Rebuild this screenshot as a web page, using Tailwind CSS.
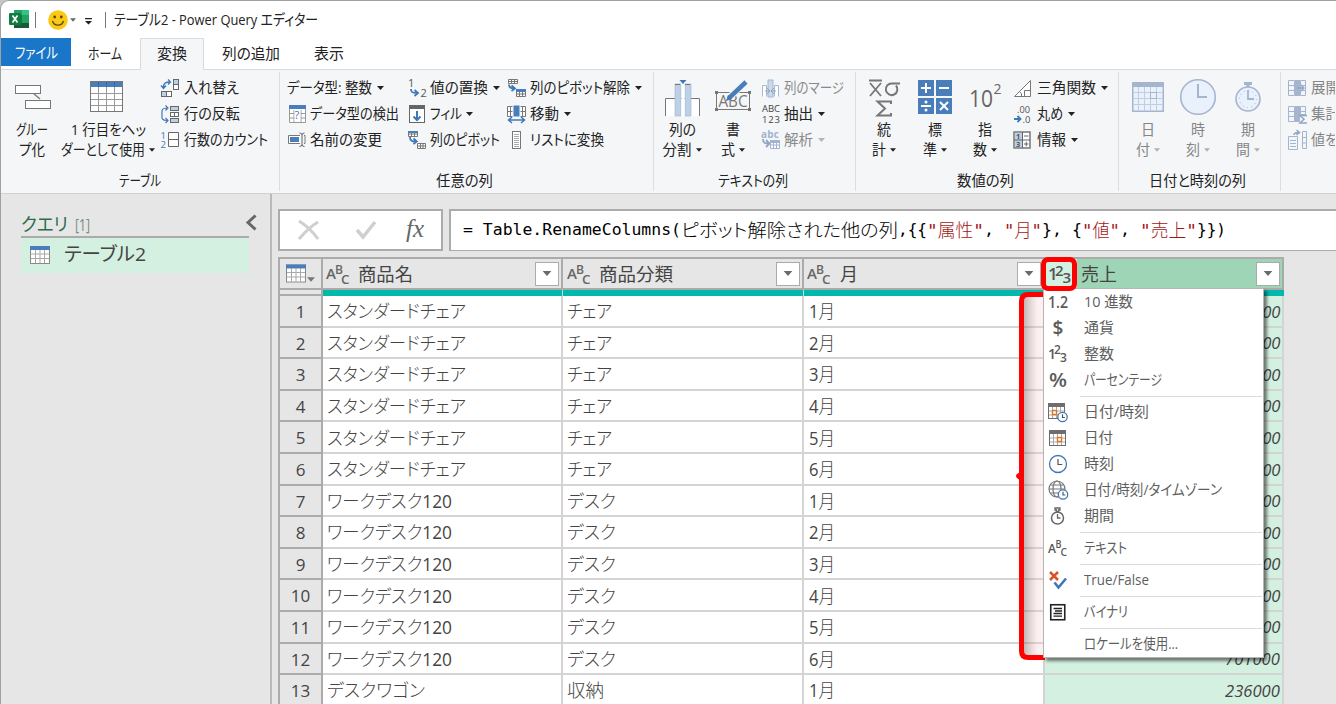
<!DOCTYPE html>
<html lang="ja">
<head>
<meta charset="utf-8">
<title>テーブル2 - Power Query エディター</title>
<script src="https://cdn.jsdelivr.net/npm/@tailwindcss/browser@4"></script>
</head>
<body class="w-[1336px] h-[704px] overflow-hidden bg-[#c6c6c6] font-['Open_Sans','Noto_Sans_CJK_JP',sans-serif] text-[15px] text-[#222] [&_svg]:overflow-visible">
<svg class="hidden">
  <symbol id="caret" viewBox="0 0 7 4"><path d="M0 0h7L3.500 4z" fill="currentColor"/></symbol>
  <symbol id="table" viewBox="0 0 20 18"><rect x=".5" y=".5" width="19" height="17" fill="#fff" stroke="#8a8a8a"/><path d="M1 8h18M1 12.500h18M5.500 4v13M10 4v13M14.500 4v13" stroke="#a9a9a9"/><path d="M0 0h20v4H0z" fill="#4a7ebb"/></symbol>
  <symbol id="cal" viewBox="0 0 17 16"><rect x=".5" y=".5" width="16" height="15" fill="#fff" stroke="#6d6d6d"/><path d="M0 0h17v4H0z" fill="#6d6d6d"/><path d="M1 8h15M1 12h15M4.500 4v11M8.500 4v11M12.500 4v11" stroke="#aaa"/><rect x="8.500" y="7.500" width="4" height="4" fill="#fff" stroke="#e0751a" stroke-width="1.400"/></symbol>
  <symbol id="cal2" viewBox="0 0 17 16"><rect x=".5" y=".5" width="16" height="15" fill="#fff" stroke="#6d6d6d"/><path d="M0 0h17v4H0z" fill="#6d6d6d"/><path d="M1 8h15M1 12h15M4.500 4v11M8.500 4v11M12.500 4v11" stroke="#aaa"/><rect x="4.500" y="7.500" width="4" height="4" fill="#fff" stroke="#e0751a" stroke-width="1.400"/></symbol>
</svg>

<div class="w-full h-full flex flex-col bg-white rounded-tl-[9px] border-l border-t border-[#a0a0a0] overflow-hidden">
  <!-- title bar -->
  <header class="h-[37px] shrink-0 flex items-center pl-[8px]">
    <svg class="w-[21px] h-[19px] shrink-0" viewBox="0 0 21 19"><path d="M5 0h15v18H5z" fill="#21a366"/><path d="M5 0h8v5H5z" fill="#21a366"/><path d="M13 0h7v5h-7z" fill="#33c481"/><path d="M5 5h8v8H5z" fill="#107c41"/><path d="M5 13h15v5H5z" fill="#185c37"/><rect y="3" width="12" height="12" rx="1" fill="#107c41"/><path d="M3.500 5.500l5 7M8.500 5.500l-5 7" stroke="#fff" stroke-width="1.700"/></svg>
    <span class="w-px h-4 bg-[#777] ml-[5px]"></span>
    <svg class="w-[20px] h-[20px] ml-[12px] shrink-0" viewBox="0 0 20 20"><circle cx="10" cy="10" r="9.800" fill="#fcc816"/><circle cx="6.700" cy="7" r="1.400" fill="#5c4a10"/><circle cx="13.300" cy="7" r="1.400" fill="#5c4a10"/><path d="M4.500 11c1.500 5.500 9.500 5.500 11 0" fill="none" stroke="#5c4a10" stroke-width="1.300"/></svg>
    <svg class="w-[6px] h-[4px] ml-[2px] text-[#666]"><use href="#caret"/></svg>
    <svg class="w-[7px] h-[7px] ml-[9px] mt-[3px]" viewBox="0 0 7 7"><path d="M0 0h7v1.300H0zM0 3h7L3.500 6.500z" fill="#222"/></svg>
    <span class="w-px h-4 bg-[#777] ml-[13px]"></span>
    <span class="ml-[8px] text-[15px]" data-w="204">テーブル2 - Power Query エディター</span>
  </header>
  <!-- tabs -->
  <nav class="h-[32px] shrink-0 flex border-b border-[#d9dbde]">
    <div class="w-[70px] h-[28px] bg-[#1976c8] text-white flex items-center pl-[14px]"><span data-w="43">ファイル</span></div>
    <div class="w-[69px] h-[31px] flex items-center pl-[17px]"><span data-w="34">ホーム</span></div>
    <div class="w-[64px] h-[32px] bg-[#f4f6f8] border border-b-0 border-[#d9dbde] flex items-center pl-[16px] pb-[2px]"><span data-w="30">変換</span></div>
    <div class="w-[92px] h-[31px] flex items-center pl-[18px]"><span data-w="58">列の追加</span></div>
    <div class="h-[31px] flex items-center pl-[18px]"><span data-w="30">表示</span></div>
  </nav>
  <!-- ribbon -->
  <section class="h-[124px] shrink-0 bg-[#f4f6f8] border-b border-[#cfd1d4] flex py-[2px] text-[14.500px] leading-[20px]">
    <!-- table group -->
    <div class="w-[279px] shrink-0 border-r border-[#dcdee1] flex flex-col">
      <div class="h-[98px] flex">
        <div class="w-[62px] flex flex-col items-center pt-[3px]">
          <svg class="w-[38px] h-[45px]" viewBox="0 0 38 45"><path d="M20 18l7 6" stroke="#777" stroke-width="1.300"/><rect x="2.500" y="10.500" width="25" height="8" fill="#fff" stroke="#777"/><rect x="12.500" y="25.500" width="25" height="8" fill="#fff" stroke="#777"/></svg>
          <span data-w="32">グルー</span><span data-w="26">プ化</span>
        </div>
        <div class="w-[90px] flex flex-col items-center pt-[3px]">
          <svg class="w-[34px] h-[45px]" viewBox="0 0 34 45"><rect x="-.5" y="6.500" width="32" height="30" fill="#fff" stroke="#777"/><path d="M0 18.500h31M0 24.500h31M0 30.500h31M7.500 12v24M15.500 12v24M23.500 12v24" stroke="#999"/><path d="M0 7h31v5H0z" fill="#4a7ebb"/><path d="M7.500 7v5M15.500 7v5M23.500 7v5" stroke="#3768a3"/></svg>
          <span data-w="75">1 行目をヘッ</span>
          <div class="flex items-center gap-[4px]"><span data-w="84">ダーとして使用</span><svg class="w-[6px] h-[4px]"><use href="#caret"/></svg></div>
        </div>
        <div class="flex flex-col pt-[3px] pl-[8px]">
          <div class="h-[26px] flex items-center"><svg class="w-[19px] h-[19px] mr-[4px]" viewBox="0 0 19 19"><rect x="12.500" y=".5" width="5" height="5" fill="#bcd0e6" stroke="#666"/><rect x="12.500" y="5.500" width="5" height="5" fill="#fff" stroke="#666"/><rect x=".5" y="12.500" width="5" height="5" fill="#bcd0e6" stroke="#666"/><rect x="5.500" y="12.500" width="5" height="5" fill="#fff" stroke="#666"/><path d="M2.500 9C2 4 5 3 9 3M0 6.500L2.500 9.500L5 6.500M7 .5L9.500 3L7 5.500" fill="none" stroke="#3f78b5" stroke-width="1.300"/></svg><span data-w="55">入れ替え</span></div>
          <div class="h-[26px] flex items-center"><svg class="w-[19px] h-[19px] mr-[4px]" viewBox="0 0 19 19"><path d="M6 3C0 3 1 6 1 9.500S0 15.500 6 15.500M4.500 .5L7 3L4.500 5.500M4.500 13l2.500 2.500L4.500 18" fill="none" stroke="#3f78b5" stroke-width="1.200"/><rect x="9.500" y="1.500" width="8" height="4" fill="#bcd0e6" stroke="#666"/><rect x="9.500" y="7.500" width="8" height="4" fill="#fff" stroke="#666"/><path d="M13.500 7v5" stroke="#666"/><rect x="9.500" y="13.500" width="8" height="4" fill="#bcd0e6" stroke="#666"/></svg><span data-w="56">行の反転</span></div>
          <div class="h-[26px] flex items-center"><svg class="w-[19px] h-[19px] mr-[4px]" viewBox="0 0 19 19"><text x="-.5" y="8" font-size="9.500" fill="#3f78b5">1</text><text x="-.5" y="17" font-size="9.500" fill="#3f78b5">2</text><path d="M7.500 1.500h10v14h-10zM7.500 8.500h10" fill="#fff" stroke="#666"/></svg><span data-w="84">行数のカウント</span></div>
        </div>
      </div>
      <div class="flex justify-center pt-px"><span data-w="42">テーブル</span></div>
    </div>
    <!-- any column group -->
    <div class="w-[374px] shrink-0 border-r border-[#dcdee1] flex flex-col">
      <div class="h-[98px] flex pt-[3px] pl-[7px]">
        <div class="w-[121px]">
          <div class="h-[26px] flex items-center"><span data-w="85">データ型: 整数</span><svg class="w-[7px] h-[4px] ml-[5px]"><use href="#caret"/></svg></div>
          <div class="h-[26px] flex items-center"><svg class="w-[17px] h-[18px] ml-[2px] mr-[4px]" viewBox="0 0 17 18"><path d="M.5.5h16v17H.5zM0 8.500h17M0 13h17M5 5v13M12 5v13" fill="#fff" stroke="#999"/><path d="M0 0h17v4H0z" fill="#4a7ebb"/><path d="M5.500 5h6v11h-6z" fill="#fff"/><text x="5.500" y="14" font-size="11" fill="#3f78b5">?</text></svg><span data-w="89">データ型の検出</span></div>
          <div class="h-[26px] flex items-center"><svg class="w-[19px] h-[16px] mr-[4px]" viewBox="0 0 19 16"><path d="M13 3.500H1.500v8H13M17 3.500h1v8h-1" fill="#fff" stroke="#777"/><path d="M3 5h9v5H3z" fill="#4a7ebb"/><path d="M12.500 1Q15 1 15 3v9.500q0 2-2.500 2M17.500 1Q15 1 15 3M15 12.500q0 2 2.500 2" fill="none" stroke="#666"/></svg><span data-w="72">名前の変更</span></div>
        </div>
        <div class="w-[99px]">
          <div class="h-[26px] flex items-center"><svg class="w-[20px] h-[19px] mr-[2px]" viewBox="0 0 20 19"><text x="0" y="8" font-size="11" fill="#555">1</text><text x="12.500" y="18" font-size="11" fill="#555">2</text><path d="M3 10c0 3 1 4 6 4M6.500 11L10 14L6.500 17" fill="none" stroke="#3f78b5" stroke-width="1.800"/></svg><span data-w="58">値の置換</span><svg class="w-[7px] h-[4px] ml-[5px]"><use href="#caret"/></svg></div>
          <div class="h-[26px] flex items-center"><svg class="w-[20px] h-[19px] mr-[2px]" viewBox="0 0 20 19"><rect x="1.500" y=".5" width="15" height="17" fill="#fff" stroke="#666"/><path d="M1 0h16v4H1z" fill="#666"/><path d="M9 6v9M5.500 11.500L9 15l3.500-3.500" fill="none" stroke="#3f78b5" stroke-width="2"/></svg><span data-w="32">フィル</span><svg class="w-[7px] h-[4px] ml-[4px]"><use href="#caret"/></svg></div>
          <div class="h-[26px] flex items-center"><svg class="w-[20px] h-[19px] mr-[2px]" viewBox="0 0 20 19"><path d="M.5.5h9v5h-9zM0 3h10M3.500 0v6M6.500 0v6M9.500 12.500h8v5h-8zM9 15h9M12.500 12v6M15 12v6" fill="#fff" stroke="#777"/><path d="M0 0h10v2H0z" fill="#4a7ebb"/><path d="M2 6c0 4 2 4.500 6 4.500M5.500 7.500L8.800 10.500L5.500 13" fill="none" stroke="#3f78b5" stroke-width="1.800"/></svg><span data-w="70">列のピボット</span></div>
        </div>
        <div>
          <div class="h-[26px] flex items-center"><svg class="w-[20px] h-[19px] mr-[3px]" viewBox="0 0 20 19"><path d="M1.500.5h9v4h-9zM1 2.500h10M4.500 0v5M7.500 0v5M9.500 10.500h9v7h-9zM9 15h10M12.500 12v6M15.500 12v6" fill="#fff" stroke="#777"/><path d="M9 10h10v3H9z" fill="#4a7ebb"/><path d="M2 5.500c0 3 2 4 5 4M4.500 6.500L8 9.500L4.500 12" fill="none" stroke="#3f78b5" stroke-width="1.800"/></svg><span data-w="100">列のピボット解除</span><svg class="w-[7px] h-[4px] ml-[5px]"><use href="#caret"/></svg></div>
          <div class="h-[26px] flex items-center"><svg class="w-[20px] h-[19px] mr-[3px]" viewBox="0 0 20 19"><path d="M.5 1.500h18v10H.5zM0 6.500h19M3.500 1v11M15.500 1v11" fill="#fff" stroke="#777"/><path d="M6 0h7v12H6z" fill="#4a7ebb" stroke="#f4f6f8"/><path d="M2 15h15M5 12l-3.500 3L5 18M14 12l3.500 3L14 18" fill="none" stroke="#3f78b5" stroke-width="1.500"/></svg><span data-w="29">移動</span><svg class="w-[7px] h-[4px] ml-[5px]"><use href="#caret"/></svg></div>
          <div class="h-[26px] flex items-center"><svg class="w-[20px] h-[19px] mr-[3px]" viewBox="0 0 20 19"><rect x="5.500" y=".5" width="8" height="17" fill="#fff" stroke="#777"/><path d="M7 3.500h5M7 5.500h5M7 7.500h5M7 9.500h5M7 11.500h5M7 13.500h5M7 15.500h5" stroke="#aaa"/></svg><span data-w="74">リストに変換</span></div>
        </div>
      </div>
      <div class="flex justify-center pt-px pr-[4px]"><span data-w="57">任意の列</span></div>
    </div>
    <!-- text column group -->
    <div class="w-[202px] shrink-0 border-r border-[#dcdee1] flex flex-col">
      <div class="h-[98px] flex pt-[3px] pl-[3px]">
        <div class="w-[50px] flex flex-col items-center">
          <svg class="w-[38px] h-[45px]" viewBox="0 0 38 45"><path d="M2.500 41V23.500h34V41" fill="#fff" stroke="#777"/><path d="M12 9h6v32h-6zM22 9h6v32h-6z" fill="#bcd0e6" stroke="#9db3cc" stroke-width=".6"/><path d="M18.500 9h3v32h-3z" fill="#fff"/><path d="M12 9.500h5M22 9.500h5" stroke="#777"/><path d="M16.500 5h7L20 9z" fill="#3f78b5"/></svg>
          <span data-w="27">列の</span>
          <div class="flex items-center gap-[4px]"><span data-w="29">分割</span><svg class="w-[6px] h-[4px]"><use href="#caret"/></svg></div>
        </div>
        <div class="w-[51px] flex flex-col items-center">
          <svg class="w-[38px] h-[45px]" viewBox="0 0 38 45"><rect x="2.500" y="17.500" width="33" height="17" fill="none" stroke="#777"/><path d="M1 16h3v3H1zM34 16h3v3h-3zM1 33h3v3H1zM34 33h3v3h-3z" fill="#777"/><text x="4.500" y="31.500" font-size="15.500" textLength="29" lengthAdjust="spacingAndGlyphs" fill="#777">ABC</text><path d="M17 21L31 7" stroke="#f4f6f8" stroke-width="7"/><path d="M15 23L32 7" stroke="#4a7ebb" stroke-width="4.500"/><path d="M12 26l2-6 4 4z" fill="#3f78b5"/></svg>
          <span data-w="14">書</span>
          <div class="flex items-center gap-[4px]"><span data-w="14">式</span><svg class="w-[6px] h-[4px]"><use href="#caret"/></svg></div>
        </div>
        <div class="pl-[3px]">
          <div class="h-[26px] flex items-center text-[#8a8a8a]"><svg class="w-[20px] h-[19px] mr-[3px]" viewBox="0 0 20 19"><path d="M1.500 17.500v-11h4v11M13.500 17.500v-11h4v11" fill="#fff" stroke="#a7b8d0"/><path d="M7 1h5v17H7z" fill="#cbd9ea" stroke="#a7b8d0"/><path d="M4 12h4M15 12h-4M6 9l3 3-3 3M13 9l-3 3 3 3" fill="none" stroke="#8fa5c4"/></svg><span data-w="60">列のマージ</span></div>
          <div class="h-[26px] flex items-center"><svg class="w-[20px] h-[22px] mr-[3px]" viewBox="0 0 20 22"><text x="1" y="9" font-size="9.500" textLength="18" fill="#444">ABC</text><text x="1" y="19.500" font-size="9.500" textLength="18" fill="#444">123</text></svg><span data-w="29">抽出</span><svg class="w-[7px] h-[4px] ml-[5px]"><use href="#caret"/></svg></div>
          <div class="h-[26px] flex items-center text-[#8a8a8a]"><svg class="w-[20px] h-[20px] mr-[3px]" viewBox="0 0 20 20"><text x="0" y="8" font-size="10" font-weight="bold" textLength="18" fill="#a3b4d0">abc</text><path d="M2 9c0 4 2 4.500 6 4.500M5 10l3.500 3.500L5 17" fill="none" stroke="#8fa5c4" stroke-width="1.800"/><path d="M9.500 11.500h9v7h-9zM9 15h10M12.500 12v6M15.500 12v6" fill="#fff" stroke="#a3b4d0"/><path d="M9 10h10v3H9z" fill="#a3b4d0"/></svg><span data-w="29">解析</span><svg class="w-[7px] h-[4px] ml-[5px] text-[#b5b5b5]"><use href="#caret"/></svg></div>
        </div>
      </div>
      <div class="flex justify-center pt-px pr-[4px]"><span data-w="70">テキストの列</span></div>
    </div>
    <!-- number column group -->
    <div class="w-[263px] shrink-0 border-r border-[#dcdee1] flex flex-col">
      <div class="h-[98px] flex pt-[3px] pl-[3px]">
        <div class="w-[50px] flex flex-col items-center">
          <svg class="w-[38px] h-[45px]" viewBox="0 0 38 45"><path d="M4 5.500h13M5 8l11 13M16 8L5 21" stroke="#777" stroke-width="1.800"/><path d="M35 8.500h-8a5.800 5.800 0 1 0 4 2" fill="none" stroke="#777" stroke-width="2"/><path d="M26 29v-2.500H12.500L20 33.500L12.500 40.500H26V38" fill="none" stroke="#777" stroke-width="2"/></svg>
          <span data-w="14">統</span>
          <div class="flex items-center gap-[4px]"><span data-w="14">計</span><svg class="w-[6px] h-[4px]"><use href="#caret"/></svg></div>
        </div>
        <div class="w-[51px] flex flex-col items-center">
          <svg class="w-[36px] h-[45px]" viewBox="0 0 36 45"><path d="M1 5h16v16H1zM19 5h16v16H19zM1 23h16v16H1zM19 23h16v16H19z" fill="#4a7ebb"/><path d="M4 13h10M9 8v10M22 13h10M4 31h10M23 27l8 8M31 27l-8 8" stroke="#fff" stroke-width="2"/><circle cx="9" cy="27" r="1.500" fill="#fff"/><circle cx="9" cy="35" r="1.500" fill="#fff"/></svg>
          <span data-w="14">標</span>
          <div class="flex items-center gap-[4px]"><span data-w="14">準</span><svg class="w-[6px] h-[4px]"><use href="#caret"/></svg></div>
        </div>
        <div class="w-[50px] flex flex-col items-center">
          <svg class="w-[34px] h-[45px]" viewBox="0 0 34 45"><text x="1" y="32" font-size="23" textLength="24" lengthAdjust="spacingAndGlyphs" fill="#666">10</text><text x="25.500" y="18.500" font-size="14" fill="#666">2</text></svg>
          <span data-w="14">指</span>
          <div class="flex items-center gap-[4px]"><span data-w="14">数</span><svg class="w-[6px] h-[4px]"><use href="#caret"/></svg></div>
        </div>
        <div class="pl-[3px]">
          <div class="h-[26px] flex items-center"><svg class="w-[20px] h-[19px] mr-[4px]" viewBox="0 0 20 19"><path d="M1.500 17.500L17.500 1.500v16zM11.500 17v-5.500h6M6.500 12.500q3 2 2 5" fill="#fff" stroke="#777"/></svg><span data-w="59">三角関数</span><svg class="w-[7px] h-[4px] ml-[5px]"><use href="#caret"/></svg></div>
          <div class="h-[26px] flex items-center"><svg class="w-[20px] h-[19px] mr-[4px]" viewBox="0 0 20 19"><text x="4" y="7.500" font-size="9.500" textLength="13" lengthAdjust="spacingAndGlyphs" fill="#555">.00</text><text x="9.500" y="17.500" font-size="9.500" fill="#555">.0</text><path d="M1 14h6M4.500 11L7.500 14L4.500 17" fill="none" stroke="#3f78b5" stroke-width="1.800"/></svg><span data-w="26">丸め</span><svg class="w-[7px] h-[4px] ml-[5px]"><use href="#caret"/></svg></div>
          <div class="h-[26px] flex items-center"><svg class="w-[20px] h-[19px] mr-[4px]" viewBox="0 0 20 19"><rect x="1" y="1" width="16" height="16" fill="#fff" stroke="#777" stroke-width="1.500"/><path d="M2 2h7v14H2z" fill="#bcd0e6"/><path d="M9.500 1v16M1 9h16M11 5h4.500M11 13h4.500M13.250 10.800v4.500" stroke="#666"/><text x="3" y="8.300" font-size="7.500" font-weight="bold" fill="#555">1</text><text x="3" y="16" font-size="7.500" font-weight="bold" fill="#555">3</text></svg><span data-w="29">情報</span><svg class="w-[7px] h-[4px] ml-[5px]"><use href="#caret"/></svg></div>
        </div>
      </div>
      <div class="flex justify-center pt-px pr-[4px]"><span data-w="57">数値の列</span></div>
    </div>
    <!-- date and time group -->
    <div class="w-[162px] shrink-0 border-r border-[#dcdee1] flex flex-col">
      <div class="h-[98px] flex pt-[3px] pl-[4px] text-[#858585]">
        <div class="w-[50px] flex flex-col items-center">
          <svg class="w-[32px] h-[45px]" viewBox="0 0 32 45"><rect x=".75" y="7.750" width="30.500" height="28.500" fill="#e9f1fc" stroke="#a6b4ce" stroke-width="1.500"/><path d="M1 17.500h30M1 23.500h30M1 29.500h30M6.500 12v24M12.500 12v24M18.500 12v24M24.500 12v24" stroke="#c3cde0"/><path d="M0 7h32v5H0z" fill="#a6b4ce"/><rect x="18.500" y="17.500" width="6" height="6" fill="#e9f1fc" stroke="#a6b4ce"/></svg>
          <span data-w="14">日</span>
          <div class="flex items-center gap-[4px]"><span data-w="14">付</span><svg class="w-[6px] h-[4px] text-[#b0b0b0]"><use href="#caret"/></svg></div>
        </div>
        <div class="w-[50px] flex flex-col items-center">
          <svg class="w-[38px] h-[45px]" viewBox="0 0 38 45"><circle cx="19" cy="22" r="17.300" fill="#e9f1fc" stroke="#a6b4ce" stroke-width="1.600"/><path d="M19 9v13h9" fill="none" stroke="#a6b4ce" stroke-width="2"/></svg>
          <span data-w="14">時</span>
          <div class="flex items-center gap-[4px]"><span data-w="14">刻</span><svg class="w-[6px] h-[4px] text-[#b0b0b0]"><use href="#caret"/></svg></div>
        </div>
        <div class="w-[50px] flex flex-col items-center">
          <svg class="w-[28px] h-[45px]" viewBox="0 0 28 45"><path d="M10 7h8v3h-2.500v3h-3v-3H10z" fill="#a6b4ce"/><circle cx="14" cy="24" r="12" fill="#e9f1fc" stroke="#a6b4ce" stroke-width="1.600"/><circle cx="14" cy="24" r="8.500" fill="none" stroke="#a6b4ce" stroke-dasharray="1 3.450"/><path d="M14 15v9h6" fill="none" stroke="#a6b4ce" stroke-width="1.800"/></svg>
          <span data-w="14">期</span>
          <div class="flex items-center gap-[4px]"><span data-w="14">間</span><svg class="w-[6px] h-[4px] text-[#b0b0b0]"><use href="#caret"/></svg></div>
        </div>
      </div>
      <div class="flex justify-center pt-px pr-[4px]"><span data-w="97">日付と時刻の列</span></div>
    </div>
    <!-- structured column group, cut by the window edge -->
    <div class="pt-[3px] pl-[6px] w-[54px] overflow-hidden text-[#858585]">
      <div class="h-[26px] w-[80px] flex items-center"><svg class="w-[21px] h-[19px] mr-[3px] shrink-0" viewBox="0 0 21 19"><path d="M1.500 1.500h6v15h-6zM1 6.500h6M1 11.500h6M13.500 1.500h5v15h-5zM13 6.500h5M13 11.500h5" fill="#f1f6fd" stroke="#a6b4ce"/><path d="M8 1h5v16H8z" fill="#a6b4ce"/><path d="M10 9h7M14 6l3 3-3 3" fill="none" stroke="#8fa5c4" stroke-width="1.300"/></svg><span data-w="29">展開</span></div>
      <div class="h-[26px] w-[80px] flex items-center"><svg class="w-[21px] h-[19px] mr-[3px] shrink-0" viewBox="0 0 21 19"><path d="M1.500 1.500h6v15h-6zM1 6.500h6M1 11.500h6M13.500 1.500h5v8h-5zM13 6.500h5" fill="#f1f6fd" stroke="#a6b4ce"/><path d="M8 1h5v16H8z" fill="#a6b4ce"/><path d="M20 10.500h-7l4 3.700-4 3.800h7" fill="none" stroke="#8fa5c4" stroke-width="1.500"/></svg><span data-w="29">集計</span></div>
      <div class="h-[26px] w-[80px] flex items-center"><svg class="w-[21px] h-[20px] mr-[3px] shrink-0" viewBox="0 0 21 20"><path d="M1.500 6.500h9v13h-9zM3 10.500h6M3 13.500h6M3 16.500h6M15.500 1.500h4v17h-4zM15 7.500h5M15 13h5" fill="#f1f6fd" stroke="#a6b4ce"/><path d="M7 5q0-2.500 5-2.500M9.500 0l3 2.500-3 2.500" fill="none" stroke="#8fa5c4" stroke-width="1.500"/></svg><span data-w="27">値を</span></div>
    </div>
  </section>

  <!-- workspace -->
  <main class="flex-1 min-h-0 flex bg-[#e6e6e6]">
    <aside class="w-[271px] shrink-0 border-r-2 border-[#b9b9b9] pl-[20px] pt-[16px]">
      <div class="w-[236px] h-[26px] flex items-center justify-between">
        <div class="flex items-center text-[#2c6e4b] pt-[3px]"><span class="text-[18px]" data-w="47">クエリ</span><span class="ml-[7px] text-[16px] text-[#6f8f80]" data-w="15">[1]</span></div>
        <svg class="w-[12px] h-[17px] mb-[2px]" viewBox="0 0 12 17"><path d="M10.500 1.500L3 8.500l7.500 7" fill="none" stroke="#666" stroke-width="3"/></svg>
      </div>
      <div class="w-[228px] h-[37px] border-t-2 border-[#ababab] bg-[#d4f0e0] flex items-center pl-[9px] pb-[2px]">
        <svg class="w-[20px] h-[18px]"><use href="#table"/></svg>
        <span class="ml-[14px] text-[19px] text-[#444]" data-w="82">テーブル2</span>
      </div>
    </aside>
    <div class="flex-1 min-w-0 pl-[6px] pt-[15px]">
      <div class="flex gap-[6px] h-[42px]">
        <div class="w-[165px] shrink-0 border-2 border-[#ababab] bg-white flex items-center">
          <svg class="w-[24px] h-[22px] ml-[17px]" viewBox="0 0 24 22"><path d="M2 2C10 7 16 13 21 20M21 3C14 7 8 13 2 20" fill="none" stroke="#cfcfcf" stroke-width="3"/></svg>
          <svg class="w-[22px] h-[20px] ml-[34px]" viewBox="0 0 22 20"><path d="M2 10l6 7L20 2" fill="none" stroke="#cfcfcf" stroke-width="3.500"/></svg>
          <span class="ml-[29px] mb-[3px] font-['Liberation_Serif',serif] italic text-[25px] leading-none text-[#666]" data-w="18">fx</span>
        </div>
        <div class="flex-1 border-2 border-r-0 border-b border-[#ababab] bg-white flex items-center pl-[12px] text-black whitespace-pre font-['DejaVu_Sans_Mono','Noto_Sans_CJK_JP',monospace] text-[16.400px]">
          <span data-w="218">= Table.RenameColumns(</span><span class="text-[18px] font-light" data-w="217">ピボット解除された他の列</span><span data-w="29">,{{</span><span class="text-[#a31515] text-[18px] font-light" data-w="57">"属性"</span><span data-w="20">, </span><span class="text-[#a31515] text-[18px] font-light" data-w="38">"月"</span><span data-w="40">}, {</span><span class="text-[#a31515] text-[18px] font-light" data-w="38">"値"</span><span data-w="20">, </span><span class="text-[#a31515] text-[18px] font-light" data-w="57">"売上"</span><span data-w="29">}})</span>
        </div>
      </div>
      <div class="relative mt-[6px] w-[1006px] border-t-2 border-l-2 border-[#ababab]">
        <!-- column headers -->
        <div class="flex h-[31px] border-b-2 border-[#ababab] text-[18.500px] text-[#444]">
          <div class="w-[43px] border-r-2 border-[#ababab] flex items-center pl-[6px]"><svg class="w-[20px] h-[19px]"><use href="#table"/></svg><svg class="w-[8px] h-[5px] ml-[1px] mt-[12px] text-[#777]"><use href="#caret"/></svg></div>
          <div id="heads" class="flex"></div>
        </div>
        <!-- quality bar -->
        <div class="flex h-[6px]">
          <div class="w-[43px] border-r-2 border-b-2 border-[#ababab]"></div>
          <div class="w-[240px] bg-[#01b8aa] border-r border-[#d4d4d4]"></div>
          <div class="w-[241px] bg-[#01b8aa] border-r border-[#d4d4d4]"></div>
          <div class="w-[241px] bg-[#01b8aa] border-r border-[#d4d4d4]"></div>
          <div class="w-[239px] bg-[#01b8aa]"></div>
        </div>
        <div id="rows" class="text-[18px] text-[#444]"></div>

        <!-- marker bracket and highlight ring -->
        <svg class="absolute left-[736px] top-[-2px] w-[64px] h-[408px]" viewBox="0 0 64 408">
          <defs><linearGradient id="shade"><stop offset="0" stop-color="#7a5f5f" stop-opacity=".5"/><stop offset=".7" stop-color="#f3c8c8" stop-opacity=".28"/><stop offset="1" stop-color="#f3c8c8" stop-opacity=".28"/></linearGradient></defs>
          <path d="M7 38h21v362H7z" fill="url(#shade)"/>
          <path d="M29 37.500H12q-6.500 0-6.500 6.500V394q0 6.500 6.500 6.500H29" fill="none" stroke="#fe0000" stroke-width="5"/>
          <path d="M6 214L1 217q-2 2 0 4l5 4z" fill="#fe0000"/>
        </svg>
        <!-- type menu -->
        <div id="menu" class="absolute left-[763px] top-[29px] w-[221px] h-[370px] bg-white border border-[#b5b5b5] shadow-[3px_3px_3px_rgba(0,0,0,0.5)] text-[14.500px] text-[#5e5e5e]"></div>
        <div class="absolute left-[761px] top-[-2px] w-[36px] h-[34px] border-[5px] border-[#fe0000] rounded-[7px]"></div>
      </div>
    </div>
  </main>
</div>

<script>
const abc = '<svg class="w-[25px] h-[22px] shrink-0" viewBox="0 0 25 22"><g fill="#666" font-weight="600"><text x="0" y="16" font-size="14" textLength="10" lengthAdjust="spacingAndGlyphs">A</text><text x="9" y="11" font-size="13" textLength="8" lengthAdjust="spacingAndGlyphs">B</text><text x="15" y="21" font-size="13" textLength="8.500" lengthAdjust="spacingAndGlyphs">C</text></g></svg>';
const n123 = '<svg class="w-[23px] h-[22px] shrink-0" viewBox="0 0 23 22"><g fill="#555" font-weight="600"><text x="-1" y="16.500" font-size="17">1</text><text x="6" y="12.500" font-size="15">2</text><text x="13.500" y="20" font-size="15">3</text></g></svg>';
const drop = '<div class="w-[24px] h-[24px] mr-[2px] bg-white border border-[#ababab] flex items-center justify-center shrink-0"><svg class="w-[10px] h-[5px] text-[#6a6a6a]"><use href="#caret"/></svg></div>';
const head = (cls, icon, w, t, gap) => `<div class="${cls}">${icon}<span class="${gap}" data-w="${w}">${t}</span><div class="flex-1"></div>${drop}</div>`;
document.getElementById('heads').innerHTML =
  head('w-[240px] border-r-2 border-[#ababab] flex items-center pl-[3px]', abc, 55, '商品名', 'ml-[7px]') +
  head('w-[241px] border-r-2 border-[#ababab] flex items-center pl-[4px]', abc, 74, '商品分類', 'ml-[7px]') +
  head('w-[241px] border-r-2 border-[#ababab] flex items-center pl-[3px]', abc, 18, '月', 'ml-[8px]') +
  head('w-[239px] border-r-2 border-[#ababab] flex items-center pl-[4px] bg-[linear-gradient(90deg,#d4f0e0_32px,#9fd5b7_32px)]', n123, 36, '売上', 'ml-[9px]');

const data = [];
for (let m = 1; m <= 6; m++) data.push(['スタンダードチェア', 139, 'チェア', 45, m, '000']);
for (let m = 1; m <= 6; m++) data.push(['ワークデスク<b class="font-normal">120</b>', 125, 'デスク', 49, m, m === 6 ? '701000' : '000']);
data.push(['デスクワゴン', 98, '収納', 37, 1, '236000']);
document.getElementById('rows').innerHTML = data.map((r, i) => `<div class="flex h-[31.600px]">
  <div class="w-[43px] border-r-2 border-b-2 border-[#ababab] flex items-center justify-center pt-[2px] text-[17px]">${i + 1}</div>
  <div class="w-[240px] border-r-2 border-b-2 border-[#d4d4d4] bg-white flex items-center pt-[2px] pl-[4px]"><span class="font-light" data-w="${r[1]}">${r[0]}</span></div>
  <div class="w-[241px] border-r-2 border-b-2 border-[#d4d4d4] bg-white flex items-center pt-[2px] pl-[4px]"><span class="font-light" data-w="${r[3]}">${r[2]}</span></div>
  <div class="w-[241px] border-r-2 border-b-2 border-[#d4d4d4] bg-white flex items-center pt-[2px] pl-[5px]"><span class="font-light" data-w="26"><b class="font-normal">${r[4]}</b>月</span></div>
  <div class="w-[239px] border-r-2 border-b-2 border-[#d4d4d4] bg-[#d4f0e0] flex items-center justify-end pt-[1px] pr-[2px] italic text-[17px]"><span data-w="${r[5].length * 9.15}">${r[5]}</span></div>
</div>`).join('');

const t = (s, size, x, y, w) => `<text x="${x}" y="${y}" font-size="${size}" font-weight="600" fill="#5a5a5a"${w ? ` textLength="${w}" lengthAdjust="spacingAndGlyphs"` : ''}>${s}</text>`;
const clock = (x, y, r) => `<circle cx="${x}" cy="${y}" r="${r}" fill="#fff" stroke="#3f78b5" stroke-width="1.300"/><path d="M${x} ${y - r * .6}V${y + .5}h${r * .5}" fill="none" stroke="#555" stroke-width="1.200"/>`;
const items = [
  [t('1.2', 16, 1, 17, 20), 49, '10 進数'],
  [t('$', 19, 5.5, 18), 30, '通貨'],
  [t('1', 14, 1, 16) + t('2', 12, 7, 11) + t('3', 12, 13, 19), 30, '整数'],
  [t('%', 20, 2, 18, 18), 78, 'パーセンテージ'],
  null,
  ['<use href="#cal2" x="1" y="2" width="17" height="16"/>' + clock(15.5, 16, 4.7), 65, '日付/時刻'],
  ['<use href="#cal" x="2" y="3" width="17" height="16"/>', 29, '日付'],
  [clock(11, 11, 8.5), 30, '時刻'],
  ['<g fill="none" stroke="#777" stroke-width="1.200"><circle cx="10" cy="10" r="8"/><ellipse cx="10" cy="10" rx="4" ry="8"/><path d="M2 10h16M3.500 6h13M3.500 14h13"/></g>' + clock(16, 15.5, 4.7), 138, '日付/時刻/タイムゾーン'],
  ['<circle cx="10.500" cy="13" r="6" fill="#fff" stroke="#666" stroke-width="1.500"/><path d="M8 3h5v2h-1.500v2h-2V5H8zM10.500 9v4h3" fill="none" stroke="#666" stroke-width="1.300"/>', 30, '期間'],
  null,
  [t('A', 12, 1, 16, 8) + t('B', 11, 8.5, 11, 6) + t('C', 11, 13.5, 19, 6.500), 43, 'テキスト'],
  null,
  ['<path d="M3 3l8 8M11 3l-8 8" stroke="#d9532c" stroke-width="2.500"/><path d="M7.500 13.500l4 5 7.500-9" fill="none" stroke="#3f78b5" stroke-width="2.600"/>', 65, 'True/False'],
  null,
  ['<rect x="3.750" y="3.750" width="14" height="15" fill="#fff" stroke="#222" stroke-width="1.600"/><path d="M6.500 7.500h8.500M8 10h7M6.500 12.500h8.500M6.500 15.200h8.500" stroke="#222" stroke-width="1.300"/>', 44, 'バイナリ'],
  null,
  ['', 94, 'ロケールを使用...'],
];
document.getElementById('menu').innerHTML = items.map(i => i
  ? `<div class="h-[26px] flex items-center"><svg class="w-[22px] h-[22px] ml-[3px] shrink-0" viewBox="0 0 22 22">${i[0]}</svg><span class="ml-[15px]" data-w="${i[1]}">${i[2]}</span></div>`
  : '<div class="h-[6px] flex items-center"><div class="ml-[36px] w-[182px] h-px bg-[#dcdcdc]"></div></div>').join('');

// Condense or widen each label so that it takes exactly its data-w width.
function fitLabels() {
  document.querySelectorAll('[data-w]').forEach(el => {
    const w = parseFloat(el.dataset.w);
    Object.assign(el.style, { display: 'inline-block', whiteSpace: 'pre', flexShrink: 0, width: 'max-content', transform: 'none', fontFeatureSettings: '"palt"' });
    const natural = el.getBoundingClientRect().width;
    Object.assign(el.style, { width: w + 'px', transformOrigin: '0 50%', transform: `scaleX(${w / natural})` });
  });
}
fitLabels();
window.addEventListener('load', () => {
  fitLabels();
  requestAnimationFrame(fitLabels);
  document.fonts.ready.then(fitLabels);
  setTimeout(fitLabels, 60);
});
</script>
</body>
</html>
